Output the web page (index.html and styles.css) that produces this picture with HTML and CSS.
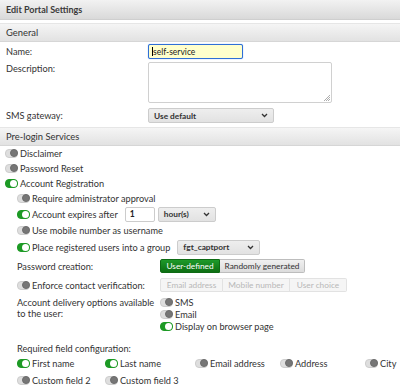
FILE: index.html
```html
<!DOCTYPE html>
<html lang="en">
  <head>
    <meta charset="UTF-8" />
    <title>Edit Portal Settings</title>
    <link rel="stylesheet" href="styles.css">
  </head>
  <body>
    <div class="title-bar">Edit Portal Settings</div>

    <div class="section-header">General</div>
    <div class="general">
      <div class="field name-row">
        <label>Name:</label>
        <div class="text-input focused"><span class="caret"></span>self-service</div>
      </div>
      <div class="field desc-row">
        <label>Description:</label>
        <div class="textarea">
          <svg class="grip" width="7" height="7" viewBox="0 0 7 7">
            <path d="M7 1L1 7M7 3L3 7M7 5L5 7" stroke="#999" stroke-width="0.8" />
          </svg>
        </div>
      </div>
      <div class="field sms-row">
        <label>SMS gateway:</label>
        <div class="select sms-select">
          <span>Use default</span>
          <svg width="7" height="5" viewBox="0 0 7 5"><path d="M1 1l2.5 2.5L6 1" fill="none" stroke="#333" stroke-width="1.3" /></svg>
        </div>
      </div>
    </div>

    <div class="section-header">Pre-login Services</div>
    <div class="services">
      <div class="row"><span class="toggle"></span>Disclaimer</div>
      <div class="row"><span class="toggle"></span>Password Reset</div>
      <div class="row"><span class="toggle on"></span>Account Registration</div>

      <div class="sub">
        <div class="row"><span class="toggle"></span>Require administrator approval</div>
        <div class="row expires">
          <span class="toggle on"></span>Account expires after
          <div class="text-input num">1</div>
          <div class="select hours">
            <span>hour(s)</span>
            <svg width="7" height="5" viewBox="0 0 7 5"><path d="M1 1l2.5 2.5L6 1" fill="none" stroke="#333" stroke-width="1.3" /></svg>
          </div>
        </div>
        <div class="row mobile"><span class="toggle"></span>Use mobile number as username</div>
        <div class="row tall">
          <span class="toggle on"></span>Place registered users into a group
          <div class="select group">
            <span>fgt_captport</span>
            <svg width="7" height="5" viewBox="0 0 7 5"><path d="M1 1l2.5 2.5L6 1" fill="none" stroke="#333" stroke-width="1.3" /></svg>
          </div>
        </div>

        <div class="row spaced option-row">
          <div class="opt-label">Password creation:</div>
          <div class="segments">
            <span class="seg active">User-defined</span>
            <span class="seg pw-random">Randomly generated</span>
          </div>
        </div>
        <div class="row spaced option-row">
          <div class="opt-label"><span class="toggle"></span>Enforce contact verification:</div>
          <div class="segments disabled">
            <span class="seg s-email">Email address</span>
            <span class="seg s-mobile">Mobile number</span>
            <span class="seg s-choice">User choice</span>
          </div>
        </div>

        <div class="delivery">
          <div class="opt-label multi">Account delivery options available<br>to the user:</div>
          <div class="delivery-list">
            <div class="mini"><span class="toggle"></span>SMS</div>
            <div class="mini"><span class="toggle"></span>Email</div>
            <div class="mini"><span class="toggle on"></span>Display on browser page</div>
          </div>
        </div>

        <div class="row req-label">Required field configuration:</div>
        <div class="req-grid">
          <div class="row"><span class="toggle on"></span>First name</div>
          <div class="row"><span class="toggle on"></span>Last name</div>
          <div class="row"><span class="toggle"></span>Email address</div>
          <div class="row"><span class="toggle"></span>Address</div>
          <div class="row"><span class="toggle"></span>City</div>
          <div class="row"><span class="toggle"></span>Custom field 2</div>
          <div class="row"><span class="toggle"></span>Custom field 3</div>
        </div>
      </div>
    </div>
  </body>
</html>
```

FILE: styles.css
```css
body {
  margin: 0;
  padding: 0;
  background: #ffffff;
  color: #333333;
  font-family: "Lato", "Open Sans", sans-serif;
  font-size: 9.2px;
  overflow: hidden;
}
.title-bar {
  height: 19px;
  line-height: 19px;
  padding-left: 6px;
  background: linear-gradient(#f2f2f2, #d9d9d9);
  border-bottom: 1px solid #cfcfcf;
  font-weight: bold;
  font-size: 9px;
  color: #3a3a3a;
  margin-bottom: 3px;
}
.section-header {
  height: 17px;
  line-height: 17px;
  padding-left: 6px;
  background: linear-gradient(#f5f5f5, #e2e2e2);
  border-top: 1px solid #e6e6e6;
  border-bottom: 1px solid #d6d6d6;
  font-size: 9.4px;
  color: #333333;
}
/* General */
.general {
  padding: 2px 0 4px 0;
}
.field {
  display: flex;
  padding-left: 6px;
}
.field label {
  width: 142px;
  flex: none;
}
.name-row {
  height: 15px;
  align-items: center;
}
.desc-row {
  margin-top: 3px;
  height: 41px;
}
.desc-row label {
  padding-top: 1px;
}
.sms-row {
  margin-top: 5px;
  height: 15px;
  align-items: center;
}
.text-input {
  display: flex;
  align-items: center;
  height: 13px;
  border: 1px solid #cccccc;
  border-radius: 2px;
  padding: 0 4px;
  font-size: 8.5px;
  color: #222222;
  background: #ffffff;
  box-sizing: content-box;
}
.text-input.focused {
  width: 88px;
  padding: 0 2px 0 3px;
  background: #ffffcc;
  border-color: #2f6fd6;
  box-shadow: 0 0 1px #5a9aff;
}
.caret {
  width: 1px;
  height: 9px;
  background: #000000;
}
.textarea {
  position: relative;
  width: 182px;
  height: 39px;
  border: 1px solid #d0d0d0;
  border-radius: 2px;
}
.grip {
  position: absolute;
  right: 1px;
  bottom: 1px;
}
.select {
  display: flex;
  align-items: center;
  justify-content: space-between;
  height: 13px;
  padding: 0 5px;
  border: 1px solid #cccccc;
  border-radius: 2px;
  background: linear-gradient(#eeeeee, #e2e2e2);
  font-size: 8.3px;
  font-weight: bold;
  color: #333333;
}
.sms-select {
  width: 114px;
}
/* Pre-login services */
.services {
  padding: 0 0 0 5px;
}
.row {
  display: flex;
  align-items: center;
  height: 15px;
  white-space: nowrap;
}
.row.expires {
  height: 16px;
}
.row.mobile {
  height: 17px;
}
.row.tall {
  height: 16px;
}
.sub {
  padding-left: 12px;
}
.toggle {
  position: relative;
  flex: none;
  width: 11px;
  height: 7px;
  border-radius: 4px;
  background: #dedede;
  border: 1px solid #cdcdcd;
  margin-right: 2px;
}
.toggle::after {
  content: "";
  position: absolute;
  right: -1px;
  top: -1px;
  width: 8px;
  height: 8px;
  border: 0.5px solid #6c6c6c;
  box-sizing: border-box;
  border-radius: 50%;
  background: #767676;
}
.toggle.on {
  background: #1d9a25;
  border-color: #1d9a25;
}
.toggle.on::after {
  right: 0;
  top: 0;
  width: 7px;
  height: 7px;
  border: none;
  background: #ffffff;
}
.text-input.num {
  width: 20px;
  margin-left: 7px;
  font-weight: bold;
}
.select.hours {
  width: 46px;
  margin-left: 3px;
}
.select.group {
  width: 71px;
  margin-left: 7px;
}
.option-row {
  height: 16px;
}
.row.spaced {
  margin-top: 3px;
}
.opt-label {
  display: flex;
  align-items: center;
  width: 143px;
  flex: none;
}
.segments {
  display: flex;
  height: 14px;
}
.seg {
  display: flex;
  align-items: center;
  justify-content: center;
  height: 12px;
  border: 1px solid #bdbdbd;
  background: linear-gradient(#f0f0f0, #dcdcdc);
  font-size: 8.3px;
  color: #333333;
}
.seg.active {
  width: 58px;
  background: linear-gradient(#1e9a2a, #0d6e12);
  border-color: #0e6a14;
  color: #ffffff;
  border-radius: 2px 0 0 2px;
}
.seg.pw-random {
  width: 84px;
  border-left: none;
  border-radius: 0 2px 2px 0;
}
.segments.disabled .seg {
  background: #f5f5f5;
  border-color: #e2e2e2;
  color: #b8b8b8;
}
.seg.s-email {
  width: 61px;
  border-radius: 2px 0 0 2px;
}
.seg.s-mobile {
  width: 66px;
  border-left: none;
}
.seg.s-choice {
  width: 56px;
  border-left: none;
  border-radius: 0 2px 2px 0;
}
.delivery {
  display: flex;
  margin-top: 3px;
}
.opt-label.multi {
  display: block;
  line-height: 11px;
  white-space: nowrap;
  padding-top: 1px;
}
.mini {
  display: flex;
  align-items: center;
  height: 12px;
}
.req-label {
  margin-top: 8px;
  height: 16px;
}
.req-grid {
  display: grid;
  grid-template-columns: 88px 90px 85px 85px 35px;
  row-gap: 2px;
}
```
